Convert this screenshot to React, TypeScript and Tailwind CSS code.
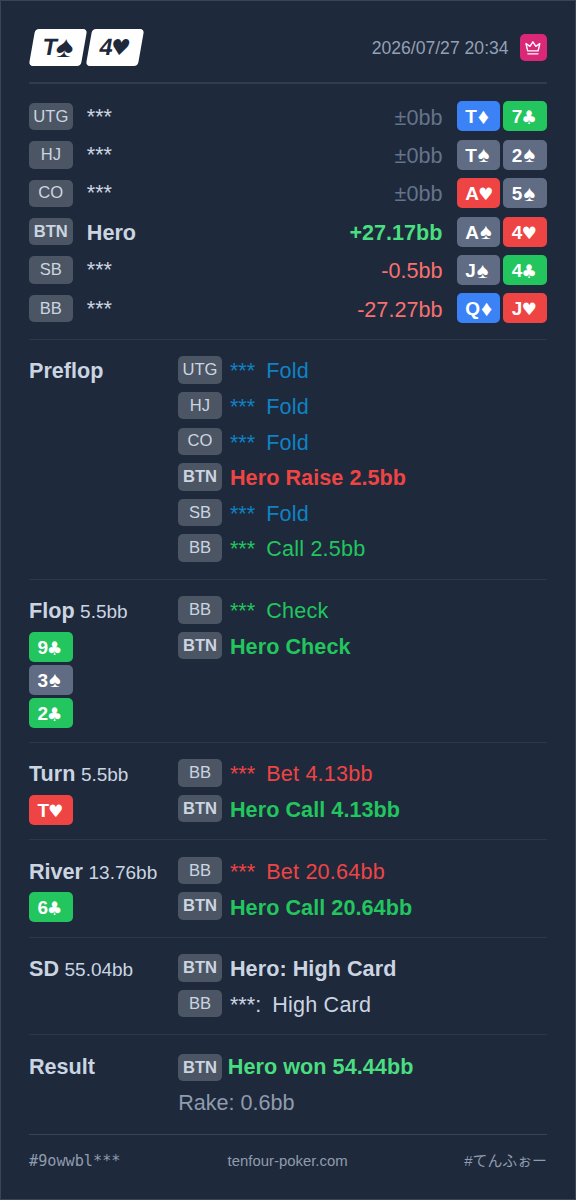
import React from 'react';
import clsx from 'clsx';

type Suit = '♠' | '♥' | '♦' | '♣';
type CardType = [string, Suit];

interface Player {
  pos: string;
  name: string;
  diff: string;
  cards: CardType[];
}

interface Action {
  pos: string;
  name: string;
  text: string;
  color: string;
}

const suitBg: Record<Suit, string> = {
  '♠': 'bg-[#5f6c84]',
  '♥': 'bg-[#ef4444]',
  '♦': 'bg-[#3b82f6]',
  '♣': 'bg-[#22c55e]',
};

// Glyph sizes differ a lot between suits, so each one is tuned separately
const suitGlyph: Record<Suit, string> = {
  '♠': 'ml-px text-[22px]',
  '♥': "-ml-px font-['DejaVu_Sans'] text-[17px] translate-y-px",
  '♦': 'ml-px text-[22px]',
  '♣': "-ml-px font-['DejaVu_Sans'] text-[17px] scale-y-110 translate-y-px",
};

const players: Player[] = [
  { pos: 'UTG', name: '***', diff: '±0bb', cards: [['T', '♦'], ['7', '♣']] },
  { pos: 'HJ', name: '***', diff: '±0bb', cards: [['T', '♠'], ['2', '♠']] },
  { pos: 'CO', name: '***', diff: '±0bb', cards: [['A', '♥'], ['5', '♠']] },
  { pos: 'BTN', name: 'Hero', diff: '+27.17bb', cards: [['A', '♠'], ['4', '♥']] },
  { pos: 'SB', name: '***', diff: '-0.5bb', cards: [['J', '♠'], ['4', '♣']] },
  { pos: 'BB', name: '***', diff: '-27.27bb', cards: [['Q', '♦'], ['J', '♥']] },
];

const FOLD = 'text-[#0f82c5]';
const CALL = 'text-[#22c55e]';
const BET = 'text-[#ef4444]';
const PLAIN = 'text-[#cbd5e1]';

const preflop: Action[] = [
  { pos: 'UTG', name: '***', text: 'Fold', color: FOLD },
  { pos: 'HJ', name: '***', text: 'Fold', color: FOLD },
  { pos: 'CO', name: '***', text: 'Fold', color: FOLD },
  { pos: 'BTN', name: 'Hero', text: 'Raise 2.5bb', color: BET },
  { pos: 'SB', name: '***', text: 'Fold', color: FOLD },
  { pos: 'BB', name: '***', text: 'Call 2.5bb', color: CALL },
];

const flop: Action[] = [
  { pos: 'BB', name: '***', text: 'Check', color: CALL },
  { pos: 'BTN', name: 'Hero', text: 'Check', color: CALL },
];

const turn: Action[] = [
  { pos: 'BB', name: '***', text: 'Bet 4.13bb', color: BET },
  { pos: 'BTN', name: 'Hero', text: 'Call 4.13bb', color: CALL },
];

const river: Action[] = [
  { pos: 'BB', name: '***', text: 'Bet 20.64bb', color: BET },
  { pos: 'BTN', name: 'Hero', text: 'Call 20.64bb', color: CALL },
];

const showdown: Action[] = [
  { pos: 'BTN', name: 'Hero:', text: 'High Card', color: PLAIN },
  { pos: 'BB', name: '***:', text: 'High Card', color: PLAIN },
];

function Badge({ pos }: { pos: string }) {
  return (
    <span
      className={clsx(
        'flex h-[27.4px] w-[43.6px] shrink-0 items-center justify-center rounded-[5px] bg-[#4b5563] pt-px text-[16.6px] leading-none text-[#cbd5e1]',
        pos === 'BTN' && 'font-bold'
      )}
    >
      {pos}
    </span>
  );
}

function PlayingCard({ card }: { card: CardType }) {
  const [rank, suit] = card;
  return (
    <span
      className={clsx(
        'flex h-[30px] w-[43.6px] shrink-0 items-center justify-start rounded-[5px] pl-[8.4px] pt-px text-[19px] font-bold leading-none text-white',
        suitBg[suit]
      )}
    >
      {rank}
      <span className={clsx('font-normal leading-none', suitGlyph[suit])}>{suit}</span>
    </span>
  );
}

function LogoCard({ rank, suit }: { rank: string; suit: Suit }) {
  return (
    <span className="flex h-[37px] w-[52px] -skew-x-[10deg] items-center justify-center rounded-[4px] bg-white pt-px text-[23.5px] font-bold leading-none text-[#1e293b]">
      {rank}
      <span
        className={clsx(
          'font-normal leading-none',
          suit === '♠' ? '-translate-y-px scale-x-110 text-[30px]' : "-ml-[2px] font-['DejaVu_Sans'] text-[22px]"
        )}
      >
        {suit}
      </span>
    </span>
  );
}

function ActionRow({ action }: { action: Action }) {
  const hero = action.name.startsWith('Hero');
  return (
    <div className="flex h-[32.4px] items-center">
      <Badge pos={action.pos} />
      <span className={clsx('ml-[8.2px] flex pt-[2.4px] leading-none', action.color, hero && 'font-bold tracking-[0.06px]')}>
        <span>{action.name}</span>
        <span className={hero ? 'ml-[6px]' : 'ml-[11px] tracking-[0.2px]'}>{action.text}</span>
      </span>
    </div>
  );
}

interface StreetProps {
  title: string;
  pot?: string;
  cards?: CardType[];
  className: string;
  children: React.ReactNode;
}

function Street({ title, pot, cards = [], className, children }: StreetProps) {
  return (
    <section className={clsx('flex border-b pt-[14.4px]', className)}>
      <div className="w-[149.2px] shrink-0">
        <div className="flex h-[35.6px] items-baseline whitespace-nowrap pt-[3.4px] leading-[28px] text-[#cbd5e1]">
          <h2 className="font-bold">{title}</h2>
          {pot && <span className="ml-[5.5px] text-[19px]">{pot}</span>}
        </div>
        <div className="flex flex-col gap-[3px] pt-[2.4px]">
          {cards.map((card) => (
            <PlayingCard key={card.join('')} card={card} />
          ))}
        </div>
      </div>
      <div className="flex flex-col gap-[3.2px]">{children}</div>
    </section>
  );
}

function ActionList({ actions }: { actions: Action[] }) {
  return (
    <>
      {actions.map((action) => (
        <ActionRow key={action.pos} action={action} />
      ))}
    </>
  );
}

export default function App() {
  return (
    <div className="flex h-[1200px] w-[576px] flex-col border border-[#374459] bg-[#1e293b] px-[28px] font-['Liberation_Sans','Noto_Sans_CJK_JP',sans-serif] text-[21.6px]">
      <header className="flex h-[82.5px] shrink-0 items-start justify-between border-b-2 border-[#303d50] pt-[27.5px]">
        <div className="flex gap-[4.6px] pl-[3px]">
          <LogoCard rank="T" suit="♠" />
          <LogoCard rank="4" suit="♥" />
        </div>
        <div className="flex h-[38px] items-center gap-[11px]">
          <span className="pt-[2px] text-[17.6px] leading-none text-[#94a0b3]">2026/07/27 20:34</span>
          <span className="flex size-[27.4px] items-center justify-center rounded-[5px] bg-[#db2777]">
            <svg viewBox="0 0 16 16" className="size-[15.8px]" fill="none" stroke="white" strokeWidth="1.4" strokeLinejoin="round" strokeLinecap="round">
              <path d="M1 3.6 L2.7 11 H13.3 L15 3.6 L11 6.4 L8 1.8 L5 6.4 Z" />
              <path d="M2.9 14 H13.1" />
            </svg>
          </span>
        </div>
      </header>

      <section className="h-[256px] shrink-0 border-b border-[#2c394c] pt-[13.8px]">
        {players.map((player) => {
          const hero = player.name === 'Hero';
          return (
            <div key={player.pos} className="flex h-[38.4px] items-center">
              <Badge pos={player.pos} />
              <span className={clsx('ml-[14.2px] leading-none text-[#cbd5e1]', hero && 'pt-[2px] font-bold')}>
                {player.name}
              </span>
              <span
                className={clsx(
                  'ml-auto mr-[14.4px] pt-[2px] leading-none',
                  player.diff.startsWith('±') && 'text-[#64748b]',
                  player.diff.startsWith('+') && 'font-bold text-[#4ade80]',
                  player.diff.startsWith('-') && 'text-[#f87171]'
                )}
              >
                {player.diff}
              </span>
              <div className="flex gap-[3px]">
                {player.cards.map((card) => (
                  <PlayingCard key={card.join('')} card={card} />
                ))}
              </div>
            </div>
          );
        })}
      </section>

      <Street title="Preflop" className="h-[240px] shrink-0 border-[#2c394c]">
        <ActionList actions={preflop} />
      </Street>
      <Street
        title="Flop"
        pot="5.5bb"
        cards={[['9', '♣'], ['3', '♠'], ['2', '♣']]}
        className="h-[163px] shrink-0 border-[#2c394c]"
      >
        <ActionList actions={flop} />
      </Street>
      <Street title="Turn" pot="5.5bb" cards={[['T', '♥']]} className="h-[97.5px] shrink-0 border-[#2c394c]">
        <ActionList actions={turn} />
      </Street>
      <Street title="River" pot="13.76bb" cards={[['6', '♣']]} className="h-[97.5px] shrink-0 border-[#2c394c]">
        <ActionList actions={river} />
      </Street>
      <Street title="SD" pot="55.04bb" className="h-[97.3px] shrink-0 border-[#2c394c]">
        <ActionList actions={showdown} />
      </Street>
      <Street title="Result" className="h-[100.2px] shrink-0 border-[#384558]">
        <div className="flex h-[32.4px] items-center">
          <div className="pt-[4px]">
            <Badge pos="BTN" />
          </div>
          <span className="ml-[6px] pt-[2px] font-bold leading-none tracking-[0.05px] text-[#4ade80]">Hero won 54.44bb</span>
        </div>
        <div className="pt-[7px] leading-none text-[#8f9bae]">Rake: 0.6bb</div>
      </Street>

      <footer className="flex justify-between pt-[17px] text-[14.9px] leading-[18px] text-[#8f9bae]">
        <span className="w-[198.6px] font-['DejaVu_Sans_Mono',monospace] text-[15.2px]">#9owwbl***</span>
        <span className="flex-1">tenfour-poker.com</span>
        <span>#てんふぉー</span>
      </footer>
    </div>
  );
}
